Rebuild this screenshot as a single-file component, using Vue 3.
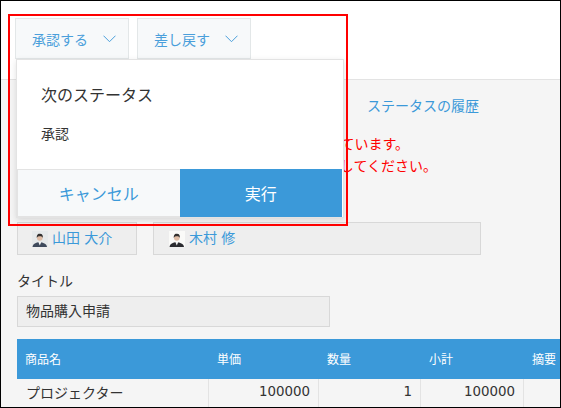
<script setup>
const users = [
  { name: '山田 大介', cls: 'user-a' },
  { name: '木村 修', cls: 'user-b' },
]
</script>

<template>
  <div class="page">
    <header class="head">
      <button class="action">
        <span>承認する</span>
        <svg class="chev" width="13" height="8" viewBox="0 0 13 8"><path d="M0.500 0.700 L6.500 6.700 L12.500 0.700" fill="none" stroke="#4a9fdb" stroke-width="1" /></svg>
      </button>
      <button class="action">
        <span>差し戻す</span>
        <svg class="chev" width="13" height="8" viewBox="0 0 13 8"><path d="M0.500 0.700 L6.500 6.700 L12.500 0.700" fill="none" stroke="#4a9fdb" stroke-width="1" /></svg>
      </button>
    </header>

    <main class="body">
      <div class="history">ステータスの履歴</div>
      <div class="notice">
        <p>このレコードは承認待ちになっています。</p>
        <p class="wide">内容を確認して処理を実行してください。</p>
      </div>

      <div class="users">
        <div v-for="u in users" :key="u.name" class="user" :class="u.cls">
          <svg class="avatar" width="16" height="16" viewBox="0 0 16 16">
            <rect width="16" height="16" :fill="u.cls === 'user-a' ? '#e6e9ea' : '#fafaf8'" />
            <path d="M0.500 16 C1 12.500 4 11.500 7.500 11 C11 11.500 14.500 12.500 15 16 Z" :fill="u.cls === 'user-a' ? '#3f4a5c' : '#2b2b30'" />
            <path d="M6.300 11 L7.800 14.500 L9.300 11 Z" fill="#f2f3f3" />
            <circle cx="7.800" cy="7" r="2.800" fill="#e0bda6" />
            <path d="M4.800 7 C4.500 3.300 6.500 2.800 7.800 2.800 C9.300 2.800 11.200 3.300 10.800 7 C10.200 5.300 9 5.200 7.800 5.200 C6.700 5.200 5.400 5.300 4.800 7 Z" fill="#33302f" />
          </svg>
          <span class="name">{{ u.name }}</span>
        </div>
      </div>

      <label class="label">タイトル</label>
      <div class="field">物品購入申請</div>

      <div class="table">
        <div class="th">商品名</div>
        <div class="th">単価</div>
        <div class="th">数量</div>
        <div class="th">小計</div>
        <div class="th">摘要</div>
        <div class="td">プロジェクター</div>
        <div class="td num">100000</div>
        <div class="td num">1</div>
        <div class="td num">100000</div>
        <div class="td"></div>
      </div>
    </main>

    <div class="popup">
      <div class="popup-body">
        <div class="popup-title">次のステータス</div>
        <div class="popup-value">承認</div>
      </div>
      <div class="popup-foot">
        <button class="cancel">キャンセル</button>
        <button class="run">実行</button>
      </div>
    </div>

    <div class="highlight"></div>
  </div>
</template>

<style>
html, body { margin: 0; padding: 0; background: #fff; }
</style>

<style scoped>
.page {
  position: relative;
  width: 561px;
  height: 408px;
  box-sizing: border-box;
  border: 1px solid #000;
  overflow: hidden;
  display: flex;
  flex-direction: column;
  background: #fff;
  color: #333;
  font-family: "Noto Sans CJK JP", "Noto Sans", sans-serif;
  font-size: 14px;
}
.head {
  height: 79px;
  flex: none;
  box-sizing: border-box;
  padding: 17px 0 0 14px;
  display: flex;
  align-items: flex-start;
  gap: 8px;
  border-bottom: 1px solid #e3e3e3;
}
.action {
  width: 114px;
  height: 41px;
  box-sizing: border-box;
  border: 1px solid #e3e7e8;
  background: #f7f9fa;
  color: #4a9fdb;
  font: inherit;
  font-size: 14px;
  padding: 0 0 0 16px;
  display: flex;
  align-items: center;
  gap: 15px;
}
.chev { flex: none; margin-top: 1px; }
.body {
  flex: 1;
  min-height: 0;
  background: #f5f5f5;
  padding: 15px 0 0 16px;
  display: flex;
  flex-direction: column;
  align-items: flex-start;
}
.body > * { flex: none; }
.history {
  margin-left: 350px;
  height: 20px;
  line-height: 20px;
  color: #3b99d9;
}
.notice {
  margin-top: 17px;
  width: 392px;
  height: 75px;
  color: #f00;
  text-align: right;
}
.notice p { margin: 0; height: 22px; line-height: 22px; white-space: nowrap; }
.notice p.wide { width: 420px; }
.users {
  display: flex;
  gap: 16px;
  margin-top: 15px;
}
.user {
  height: 33px;
  box-sizing: border-box;
  border: 1px solid #d8d8d8;
  background: #eeeeee;
  color: #3b99d9;
  display: flex;
  align-items: center;
  gap: 4px;
}
.name { word-spacing: 1px; padding-bottom: 3px; }
.user-a { width: 120px; padding-left: 14px; }
.user-b { width: 328px; padding-left: 15px; }
.avatar { flex: none; }
.label {
  margin-top: 16px;
  height: 20px;
  line-height: 18px;
}
.field {
  margin-top: 5px;
  width: 313px;
  height: 31px;
  box-sizing: border-box;
  border: 1px solid #d8d8d8;
  background: #eeeeee;
  padding-left: 8px;
  line-height: 27px;
}
.table {
  margin-top: 12px;
  width: 560px;
  display: grid;
  grid-template-columns: 192px 110px 102px 103px 53px;
  grid-template-rows: 40px 30px;
}
.th {
  background: #3b99d9;
  color: #fff;
  font-size: 12px;
  padding-left: 8px;
  line-height: 40px;
  white-space: nowrap;
}
.td {
  padding: 0 8px 0 9px;
  line-height: 26px;
  border-right: 1px solid #e3e3e3;
  white-space: nowrap;
  box-sizing: border-box;
}
.td:last-child { border-right: 0; }
.num { text-align: right; font-family: "DejaVu Sans", sans-serif; font-size: 13.4px; }
.popup {
  position: absolute;
  left: 15px;
  top: 58px;
  width: 328px;
  height: 159px;
  box-sizing: border-box;
  border: 1px solid #e3e3e3;
  background: #fff;
  box-shadow: 0 2px 6px rgba(0, 0, 0, 0.12);
  display: flex;
  flex-direction: column;
  z-index: 2;
}
.popup-body { flex: 1; padding: 23px 24px 0; }
.popup-title { font-size: 16px; line-height: 22px; }
.popup-value { margin-top: 18px; line-height: 20px; font-size: 14px; }
.popup-foot {
  display: flex;
  height: 48px;
  flex: none;
  margin: 0 1px 0 0;
}
.popup-foot button {
  border: 0;
  font: inherit;
  font-size: 16px;
  padding: 0;
}
.cancel {
  width: 163px;
  background: #f7f9fa;
  color: #3b99d9;
  border-top: 1px solid #e3e3e3 !important;
  border-left: 1px solid #e3e3e3 !important;
  border-bottom: 1px solid #e3e3e3 !important;
}
.run { width: 163px; background: #3b99d9; color: #fff; }
.highlight {
  position: absolute;
  left: 7px;
  top: 13px;
  width: 340px;
  height: 212px;
  box-sizing: border-box;
  border: 2px solid #f00;
  z-index: 3;
  pointer-events: none;
}
</style>
